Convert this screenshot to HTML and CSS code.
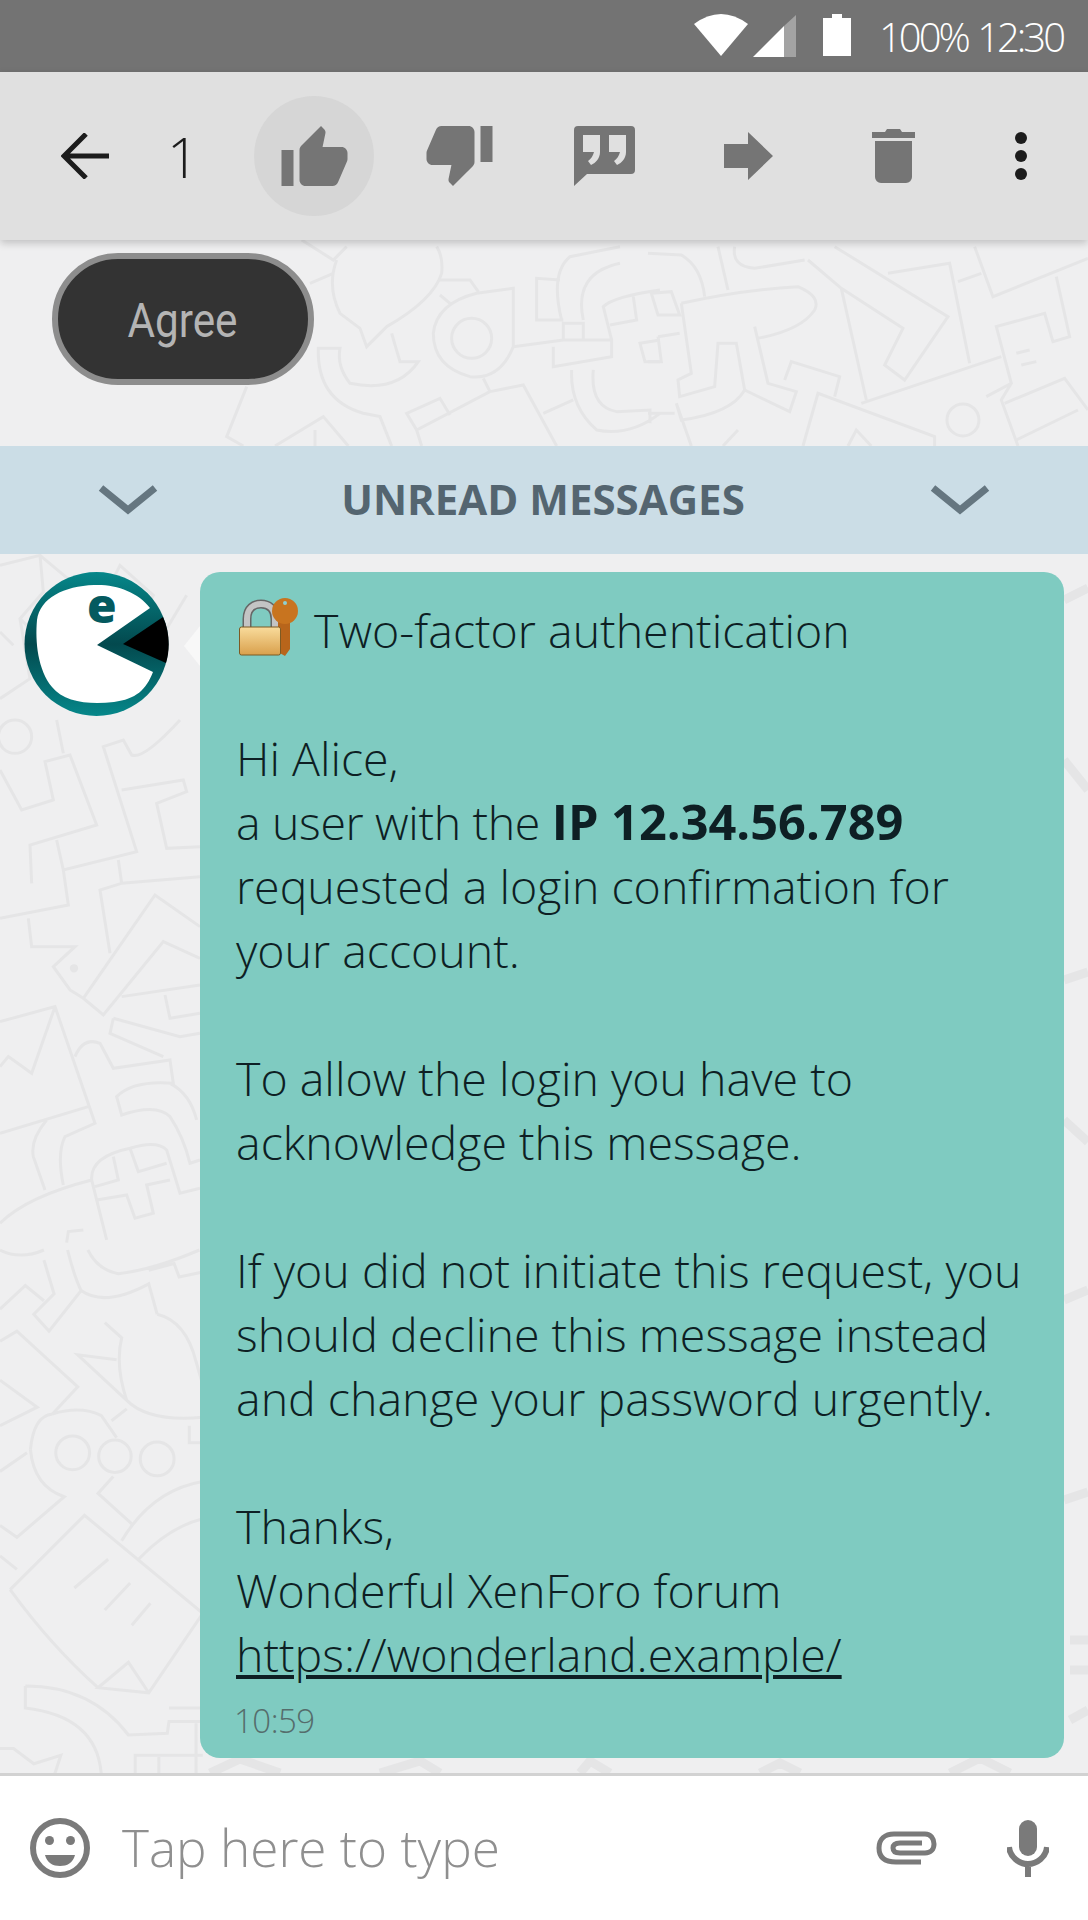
FILE: index.html
```html
<!DOCTYPE html>
<html lang="en">
<head>
    <meta charset="UTF-8">
    <meta name="viewport" content="width=device-width, initial-scale=1.0">
    <title>Two-factor authentication</title>
    <link rel="stylesheet" href="styles.css">
</head>
<body>

    <!-- Status bar -->
    <div class="status-bar">
        <svg class="status-wifi" viewBox="0 0 54 42"><path d="M27 42L0 10Q27 -10 54 10z"/></svg>
        <svg class="status-signal" viewBox="0 0 43 42"><path d="M0 42L31 11V42z"/><path class="dim" d="M31 11L43 0V42H31z"/></svg>
        <svg class="status-battery" viewBox="0 0 28 42"><path d="M9 0h10v4h9v38H0V4h9z"/></svg>
        <span class="status-text">100% 12:30</span>
    </div>

    <!-- Selection toolbar -->
    <header class="toolbar">
        <svg class="back" viewBox="0 0 48 46"><path d="M48 23H3M25 1L3 23l22 22"/></svg>
        <span class="count">1</span>
        <span class="like-circle">
            <svg class="thumb" viewBox="1 1 22 20"><path d="M1 21h4V9H1v12zm22-11c0-1.100-.9-2-2-2h-6.310l.95-4.570.03-.32c0-.41-.17-.79-.44-1.060L14.170 1 7.590 7.590C7.220 7.950 7 8.450 7 9v10c0 1.100.9 2 2 2h9c.83 0 1.540-.5 1.840-1.220l3.020-7.050c.09-.23.14-.47.14-.73v-2z"/></svg>
        </span>
        <svg class="thumb thumb-down" viewBox="1 3 22 20"><path d="M15 3H6c-.83 0-1.540.5-1.840 1.220l-3.020 7.050c-.09.23-.14.47-.14.73v2c0 1.100.9 2 2 2h6.310l-.95 4.570-.03.32c0 .41.17.79.44 1.060L9.830 23l6.590-6.590c.36-.36.58-.86.58-1.410V5c0-1.100-.9-2-2-2zm4 0v12h4V3h-4z"/></svg>
        <svg class="quote" viewBox="0 0 61 60"><path fill-rule="evenodd" d="M4 0H57a4 4 0 0 1 4 4V44a4 4 0 0 1-4 4H13L0 60V4a4 4 0 0 1 4-4zM9 9V26H20C19 30 17 33 14 35L17 39C22 37 26 32 26 26V9zM35 9V26H46C45 30 43 33 40 35L43 39C48 37 52 32 52 26V9z"/></svg>
        <svg class="forward" viewBox="0 0 49 48"><path d="M0 12H24V0L49 24L24 48V36H0z"/></svg>
        <svg class="trash" viewBox="0 0 43 54"><path d="M0 3H13L15 0H28L30 3H43V9H0zM3 12H40V48a6 6 0 0 1-6 6H9a6 6 0 0 1-6-6z"/></svg>
        <svg class="dots" viewBox="0 0 12 48"><circle cx="6" cy="6" r="6"/><circle cx="6" cy="24" r="6"/><circle cx="6" cy="42" r="6"/></svg>
    </header>

    <main class="chat">
        <!-- Wallpaper doodles, traced in 3x crop coordinates -->
        <svg class="doodles" viewBox="0 240 1088 1533">
            <g transform="translate(220 240) scale(.3333)">
                <path d="M350 60Q320 140 360 220L420 265L440 320L500 260Q640 180 665 100Q670 50 650 20M340 100L270 130M245 0L340 60L380 20"/>
                <path d="M660 120L750 120L775 155M660 165L690 190M880 145V320Q840 420 750 410Q640 380 640 280Q650 190 770 160z"/>
                <circle cx="755" cy="295" r="60"/>
                <path d="M880 320L1030 300M1030 240H950V115L1020 120M1025 240Q990 100 1050 50L1200 20M1090 240Q1060 100 1200 70M1030 300V250H1090V300zM1000 320V380L1175 350V300L1090 300M1175 300L1150 200Q1180 170 1320 150M1240 170L1250 240L1170 255M1320 300L1260 310L1275 365H1320"/>
                <path d="M515 280L540 365H595Q530 460 390 430Q350 380 360 325H295Q290 480 430 520L480 530L515 618"/>
                <path d="M790 415L810 455L590 570L560 520L660 475L690 525M810 455L910 435L1010 618M590 570L605 618M1055 390Q1050 500 1130 570Q1230 590 1320 520M1120 390Q1110 500 1190 515L1290 510V550M970 520L1060 480M80 440L20 590L70 618M165 618L310 530L385 618M285 618V570"/>
            </g>
            <g transform="translate(648 240) scale(.3333)">
                <path d="M0 40L100 45Q160 80 170 170M210 20L240 150M260 20Q250 80 320 85L470 60M100 190Q280 150 450 140Q520 170 500 210Q460 270 330 295M320 260L360 430L445 455L425 515L290 450"/>
                <path d="M480 60L580 145L765 265L710 375L770 420L900 230L560 20M580 145L655 480M720 100L905 70L965 370M930 125L1000 100M980 20L1035 170L1320 55M640 490L1060 350M1225 110L1265 290L1215 305L1190 220L1045 260L1090 430L1015 470M1090 430L1060 480L1110 618M1070 490L1250 415L1320 510M1105 600L1290 510M1105 340L1145 330M1120 375L1165 365"/>
                <circle cx="945" cy="540" r="48"/>
                <path d="M10 160L70 155L95 225H30zM30 290L95 280M0 365H40L30 290M100 190L130 400L90 420L95 470L200 440L210 310L265 310L290 450Q250 520 100 540L85 490M0 520H80M85 490L130 618M465 618L510 460L860 590V618M600 618L625 570L670 618M410 420L430 365L575 410L560 470M225 618L270 570"/>
            </g>
            <g transform="translate(0 432) scale(.3333)">
                <path d="M0 400L120 370L130 480L60 560L90 740L0 800M120 370L300 520L360 400L460 490L390 610L470 640L560 490M60 560L220 720L300 630M0 600L40 640"/>
            </g>
            <g transform="translate(0 720) scale(.3333)">
                <circle cx="45" cy="50" r="50"/>
                <path d="M0 150L65 270L160 240L135 125L210 105L290 315L90 375L95 490M170 0L190 100M170 360L190 450L410 395L310 80L370 60L395 105Q430 120 540 0M365 210L550 180L560 215L470 250L500 385L600 380M190 450L205 555L0 595M355 420L365 490L300 510L330 700M365 490L600 470"/>
                <path d="M85 595L95 680H225L160 740L210 810L250 835L310 885L490 665L600 715M250 835L465 525L600 620M365 830L600 795M495 825L510 895L600 880"/>
                <path d="M0 905L165 860L285 1210L195 1250Q170 1300 190 1395M0 1040L25 1010L95 1060L165 860M225 1010Q250 950 300 970L340 1045L510 1020L520 1090Q400 1080 350 1130L365 1185Q470 1150 510 1190Q550 1250 570 1330L600 1320M510 1090Q570 1120 590 1200M340 895L330 940L490 1010M340 895L540 950L600 940M0 1240L265 1160M140 1200Q90 1260 100 1310L135 1410"/>
                <path d="M0 1510Q80 1430 275 1380Q270 1310 390 1285Q470 1260 500 1290L540 1420L600 1405M275 1380L320 1560M340 1310L355 1380L285 1400M390 1285L415 1355L500 1330M290 1440L380 1425L405 1495L460 1480L440 1395L510 1380M200 1568L205 1535L250 1530"/>
                <circle class="speck" cx="222" cy="745" r="8"/>
            </g>
            <g transform="translate(0 1250) scale(.338)">
                <path d="M0 0Q60 30 130 0M130 30L160 130L100 190L145 240L240 120Q310 170 440 100L465 190M200 0Q220 80 240 120M260 0Q290 60 350 70Q450 60 590 0M440 60L515 40L530 80L600 65M0 175L75 105L130 150M0 270L50 240L230 405L155 485M0 385L110 465L0 520"/>
                <path d="M465 190Q550 210 580 330L600 400M310 215L360 260Q340 340 375 445L230 310L345 325M375 445Q440 510 600 495M375 470L330 505M155 485Q240 460 300 490L345 555M90 590Q100 490 155 485M90 590Q100 700 190 730L50 850L0 815M0 655L80 600M335 670L290 720L390 810"/>
                <circle cx="215" cy="600" r="50"/><circle cx="340" cy="610" r="48"/><circle cx="465" cy="618" r="50"/>
                <path d="M30 1005L250 785L600 1075L440 1310L290 1295L380 1220L440 1310M30 1005Q150 1170 290 1295M220 1000L320 915M310 1065L385 985M390 1110L445 1045M360 860Q450 710 600 685M410 915Q500 820 600 795M0 905L50 945"/>
                <path d="M500 1355H600M75 1290Q270 1290 380 1435L495 1430L500 1395H600M75 1290V1355Q290 1380 300 1556M0 1475H40L100 1520L180 1495L160 1556M400 1556V1495H600M470 1500V1556M580 1400V1556M560 520V570H600"/>
            </g>
            <g>
                <path d="M1064 600l24-12M1064 760l24 30M1064 980l24-8M1064 1120l24 22M1064 1300l24-10M1064 1500l24-8M1070 1640h18M1070 1670h18M1070 1720l18-10"/>
                <path d="M210 1773l30-14 40 14M380 1773l40-12 20 12M580 1773l10-12 20 12M760 1773l20-10 20 10M950 1773l30-15 30 15"/>
            </g>
        </svg>

        <div class="agree-row">
            <span class="agree"><span class="agree-label">Agree</span></span>
        </div>

        <div class="unread">
            <svg class="chevron" viewBox="0 0 60 30"><path d="M3 3l27 22L57 3"/></svg>
            <span class="unread-label">UNREAD MESSAGES</span>
            <svg class="chevron" viewBox="0 0 60 30"><path d="M3 3l27 22L57 3"/></svg>
        </div>

        <div class="message">
            <div class="avatar">
                <svg viewBox="0 0 145 144">
                    <defs>
                        <linearGradient id="ring" x1="0" y1="0" x2="0" y2="1">
                            <stop offset="0" stop-color="#06878a"/>
                            <stop offset=".5" stop-color="#03494e"/>
                            <stop offset="1" stop-color="#06878a"/>
                        </linearGradient>
                    </defs>
                    <circle cx="72.500" cy="72" r="72" fill="url(#ring)"/>
                    <path fill="#fff" d="M126 36L73 73L129 100C122 118 112 127 90 130C65 133 40 130 28 115C14 98 11 70 13 48C16 26 40 14 70 13C92 12 114 20 126 36z"/>
                    <path fill="#000" d="M99 72L139 45C146 60 146 78 142 91z"/>
                </svg>
                <span class="avatar-e">e</span>
            </div>
            <div class="bubble">
                <span class="tail"></span>
                <p class="lead">
                    <svg class="lock" viewBox="0 0 60 60">
                        <defs>
                            <linearGradient id="gold" x1="0" y1="0" x2="0" y2="1">
                                <stop offset="0" stop-color="#f9dc9c"/>
                                <stop offset="1" stop-color="#d9a04c"/>
                            </linearGradient>
                        </defs>
                        <path fill="none" stroke="#666" stroke-width="9" d="M8 31V22C8 11 15 7 22 7S36 11 36 22V31"/>
                        <path fill="none" stroke="#c4c4c4" stroke-width="6" d="M8 31V22C8 11 15 7 22 7S36 11 36 22V31"/>
                        <path fill="#b8651b" d="M39 24h12v28l-5 7-7-4z"/>
                        <circle cx="46" cy="14" r="13" fill="#c8741f"/>
                        <circle cx="46" cy="6" r="2" fill="#8fd0d0"/>
                        <rect x="0.500" y="30" width="41" height="28" rx="2" fill="url(#gold)" stroke="#7d5a23"/>
                    </svg>
                    <span>Two-factor authentication</span>
                </p>
                <p>Hi Alice,<br><span class="tight">a user with the </span><strong>IP 12.34.56.789</strong><br>requested a login confirmation for<br>your account.</p>
                <p>To allow the login you have to<br>acknowledge this message.</p>
                <p>If you did not initiate this request, you<br>should decline this message instead<br>and change your password urgently.</p>
                <p>Thanks,<br>Wonderful XenForo forum<br><a href="#">https://wonderland.example/</a></p>
                <div class="time">10:59</div>
            </div>
        </div>
    </main>

    <!-- Input bar -->
    <footer class="input-bar">
        <svg class="smile" viewBox="0 0 60 60">
            <circle cx="30" cy="30" r="27" fill="none" stroke-width="6"/>
            <circle cx="19.500" cy="22.500" r="4.500"/><circle cx="40.500" cy="22.500" r="4.500"/>
            <path d="M15 37H45C43 45 37 48 30 48S17 45 15 37z"/>
        </svg>
        <span class="placeholder">Tap here to type</span>
        <svg class="clip" viewBox="0 0 61 34"><path d="M45 31H20C8 31 3 26 3 17S9 3 18 3H49C55 3 58 8 58 13S55 22 49 22H24C20 22 17 21 17 17S20 12 24 12H46"/></svg>
        <svg class="mic" viewBox="0 0 42 57"><path d="M21 0a9 9 0 0 1 9 9V27a9 9 0 0 1-18 0V9A9 9 0 0 1 21 0z"/><path class="mic-arc" d="M2 27C3 37 12 44 21 44S39 37 40 27M21 44V57"/></svg>
    </footer>

</body>
</html>
```

FILE: styles.css
```css
* {
    box-sizing: border-box;
}

body {
    width: 1088px;
    height: 1920px;
    margin: 0;
    display: flex;
    flex-direction: column;
    overflow: hidden;
    font-family: "Open Sans", sans-serif;
    background-color: #efeff0;
}

/* status bar */
.status-bar {
    height: 72px;
    flex: none;
    display: flex;
    align-items: flex-start;
    background-color: #737373;
    padding-top: 14px;
    padding-left: 694px;
}

.status-bar svg {
    fill: white;
    display: block;
}

.status-wifi {
    width: 54px;
    height: 42px;
}

.status-signal {
    width: 43px;
    height: 42px;
    margin-left: 5px;
    margin-top: 1px;
}

.status-signal .dim {
    fill: #a3a3a3;
}

.status-battery {
    width: 28px;
    height: 42px;
    margin-left: 27px;
}

.status-text {
    margin-left: 28px;
    font-size: 40px;
    letter-spacing: -3px;
    word-spacing: 2px;
    line-height: 46px;
    font-weight: 300;
    color: white;
    white-space: nowrap;
}

/* toolbar */
.toolbar {
    height: 168px;
    flex: none;
    position: relative;
    z-index: 2;
    display: flex;
    align-items: center;
    padding-left: 61px;
    background-color: #e0e0e0;
    box-shadow: 0 3px 8px rgba(0, 0, 0, 0.2);
}

.toolbar svg {
    display: block;
    flex: none;
    fill: #757575;
}

.toolbar .back {
    width: 48px;
    height: 46px;
    fill: none;
    stroke: #1c1c1c;
    stroke-width: 5;
}

.count {
    width: 30px;
    margin-left: 58px;
    font-size: 56px;
    font-weight: 300;
    line-height: 64px;
    color: #1c1c1c;
}

.like-circle {
    width: 120px;
    height: 120px;
    margin-left: 57px;
    border-radius: 50%;
    background-color: #d6d6d6;
    display: flex;
    align-items: center;
    justify-content: center;
}

.thumb {
    width: 67px;
    height: 60px;
}

.thumb-down {
    margin-left: 52px;
}

.quote {
    width: 61px;
    height: 60px;
    margin-left: 81px;
}

.forward {
    width: 49px;
    height: 48px;
    margin-left: 89px;
}

.trash {
    width: 43px;
    height: 54px;
    margin-left: 99px;
}

.toolbar .dots {
    width: 12px;
    height: 48px;
    margin-left: 100px;
    fill: #1c1c1c;
}

/* chat area */
.chat {
    flex: 1;
    position: relative;
    overflow: hidden;
    display: flex;
    flex-direction: column;
    background-color: #efeff0;
}

.doodles {
    position: absolute;
    top: 0;
    left: 0;
    width: 1088px;
    height: 1533px;
    fill: none;
    stroke: #e5e5e6;
    stroke-width: 9;
}

.doodles .speck {
    fill: #e5e5e6;
}

.agree-row {
    position: relative;
    height: 206px;
    padding-top: 13px;
    padding-left: 52px;
}

.agree {
    display: flex;
    align-items: center;
    justify-content: center;
    width: 262px;
    height: 132px;
    border: 6px solid #8d8d8d;
    border-radius: 66px;
    background-color: #333;
}

.agree-label {
    display: block;
    margin-top: 3px;
    margin-left: -2px;
    font-family: Roboto, sans-serif;
    font-size: 48px;
    color: #b4b4b4;
    transform: scaleX(0.88);
}

.unread {
    position: relative;
    height: 108px;
    display: flex;
    align-items: center;
    justify-content: space-between;
    padding: 0 98px;
    background-color: #cbdde6;
}

.chevron {
    width: 60px;
    height: 30px;
    fill: none;
    stroke: #657680;
    stroke-width: 7;
}

.unread-label {
    margin-top: -4px;
    margin-left: -2px;
    font-size: 42px;
    font-weight: 700;
    color: #546570;
}

.message {
    position: relative;
    display: flex;
    align-items: flex-start;
    padding: 18px 24px 0;
}

.avatar {
    position: relative;
    width: 145px;
    height: 144px;
    flex: none;
}

.avatar svg {
    display: block;
    width: 145px;
    height: 144px;
}

.avatar-e {
    position: absolute;
    top: 2px;
    left: 63px;
    font-size: 48px;
    line-height: 62px;
    font-weight: 800;
    color: #045a5f;
}

.bubble {
    position: relative;
    width: 864px;
    height: 1186px;
    margin-left: 31px;
    padding: 25px 36px 0;
    border-radius: 20px;
    background-color: #7fcbc1;
    font-size: 46.5px;
    font-weight: 300;
    line-height: 64px;
    color: #0e1f24;
}

.tail {
    position: absolute;
    top: 54px;
    left: -16px;
    width: 16px;
    height: 40px;
    background-color: #f8f8f8;
    clip-path: polygon(100% 0, 0 50%, 100% 100%);
}

.bubble p {
    margin: 0 0 64px;
    white-space: nowrap;
}

.tight {
    letter-spacing: -0.35px;
}

.bubble strong {
    font-size: 48.7px;
    font-weight: 700;
    line-height: 0;
}

.bubble a {
    color: inherit;
}

.lock {
    display: inline-block;
    width: 60px;
    height: 60px;
    vertical-align: -9px;
    margin-left: 3px;
    margin-right: 3px;
}

.time {
    margin-top: -58px;
    margin-left: -2px;
    font-size: 33px;
    letter-spacing: -0.5px;
    line-height: 58px;
    font-weight: 300;
    color: #556d6c;
}

/* input bar */
.input-bar {
    height: 147px;
    flex: none;
    position: relative;
    display: flex;
    align-items: center;
    padding-left: 30px;
    border-top: 3px solid #d2d2d2;
    background-color: white;
}

.smile {
    width: 60px;
    height: 60px;
    fill: #7a7a7a;
    stroke: #7a7a7a;
    stroke-width: 0;
    flex: none;
}

.smile circle:first-child {
    stroke-width: 6;
}

.placeholder {
    margin-left: 32px;
    margin-top: -2px;
    width: 754px;
    font-size: 51.3px;
    font-weight: 300;
    color: #8f8f8f;
}

.clip {
    width: 61px;
    height: 34px;
    fill: none;
    stroke: #7a7a7a;
    stroke-width: 5;
    flex: none;
}

.mic {
    width: 42px;
    height: 57px;
    margin-left: 70px;
    fill: #7a7a7a;
    flex: none;
}

.mic-arc {
    fill: none;
    stroke: #7a7a7a;
    stroke-width: 6;
}
```
